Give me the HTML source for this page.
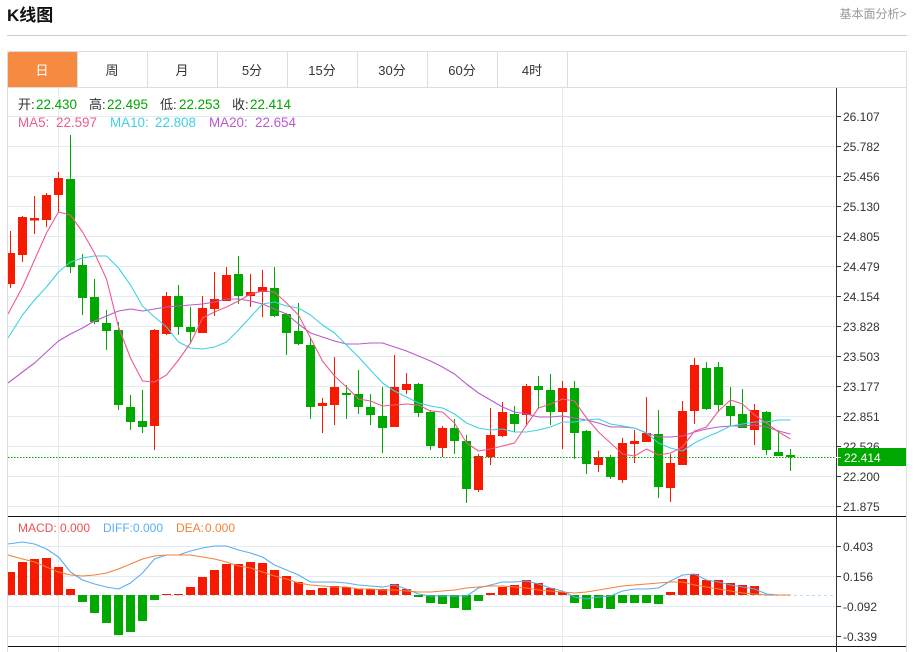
<!DOCTYPE html>
<html lang="zh">
<head>
<meta charset="utf-8">
<title>K线图</title>
<style>
html,body{margin:0;padding:0;background:#fff;width:914px;height:652px;overflow:hidden}
svg{display:block;position:absolute;left:0;top:0}
text{font-family:"Liberation Sans","Noto Sans CJK SC",sans-serif}
</style>
</head>
<body>
<svg width="914" height="652" viewBox="0 0 914 652" xmlns="http://www.w3.org/2000/svg">
<defs><clipPath id="c"><rect x="8" y="88" width="828" height="564"/></clipPath></defs>

<text x="7" y="21" font-size="17" font-weight="bold" fill="#111">K线图</text>
<text x="839.5" y="18" font-size="12" fill="#999">基本面分析&gt;</text>
<path d="M7 35.5H907" stroke="#ccc" fill="none"/>

<!-- frame and tabs -->
<path d="M7.5 51.5H906.5V652M7.5 51.5V652M7.5 87.5H906.5" stroke="#ddd" fill="none"/>
<path d="M9 52H77V87H8V53z" fill="#f58a40"/>
<path d="M77.5 52V87M147.5 52V87M217.5 52V87M287.5 52V87M357.5 52V87M427.5 52V87M497.5 52V87M567.5 52V87" stroke="#ddd" fill="none"/>
<g font-size="13" fill="#333" text-anchor="middle">
<text x="42" y="75" fill="#fff">日</text>
<text x="112" y="75">周</text>
<text x="182" y="75">月</text>
<text x="252" y="75">5分</text>
<text x="322" y="75">15分</text>
<text x="392" y="75">30分</text>
<text x="462" y="75">60分</text>
<text x="532" y="75">4时</text>
</g>

<!-- grid -->
<path d="M8 116.5H836M8 146.5H836M8 176.5H836M8 206.5H836M8 236.5H836M8 266.5H836M8 296.5H836M8 326.5H836M8 356.5H836M8 386.5H836M8 416.5H836M8 446.5H836M8 476.5H836M8 506.5H836M8 546.5H836M8 576.5H836M8 606.5H836M8 636.5H836M58.5 88V652M562.5 88V652" stroke="#e3ecf3" fill="none"/>

<g clip-path="url(#c)">
<!-- red wicks -->
<path fill="none" stroke="#f51a00" d="M10.5 231V288M22.5 216V262M34.5 196V234M46.5 193V227M58.5 172V212M154.5 329V450M166.5 292V335M202.5 296V333M214.5 272V316M226.5 267V301M250.5 274V307M262.5 270V317M322.5 398V433M334.5 357V425M394.5 355V427M406.5 373V394M442.5 426V457M478.5 454V492M490.5 408V465M502.5 402V437M526.5 384V426M562.5 381V449M598.5 451V472M622.5 438V483M634.5 430V463M646.5 397V442M670.5 454V502M682.5 401V465M694.5 358V424M754.5 404V445"/>
<!-- green wicks -->
<path fill="none" stroke="#00a800" d="M70.5 135V273M82.5 254V315M94.5 279V324M106.5 310V350M118.5 322V410M130.5 395V430M142.5 390V433M178.5 285V335M190.5 307V343M238.5 256V304M274.5 267V317M286.5 313V355M298.5 303V345M310.5 337V419M346.5 385V419M358.5 370V414M370.5 394V425M382.5 387V453M418.5 383V417M430.5 410V450M454.5 419V454M466.5 435V503M514.5 406V432M538.5 376V409M550.5 374V425M574.5 381V459M586.5 430V474M610.5 455V479M658.5 410V498M706.5 362V410M718.5 362V412M730.5 387V426M742.5 389V428M766.5 411V455M778.5 430V456M790.5 449V471"/>
<!-- red bodies -->
<path fill="#f51a00" d="M6 253h9V284h-9zM18 217h9V255h-9zM30 218h9V220.5h-9zM42 195h9V220h-9zM54 178h9V195h-9zM150 330h9V426h-9zM162 296h9V334h-9zM198 308h9V333h-9zM210 299h9V309h-9zM222 275h9V301h-9zM246 292h9V296h-9zM258 287h9V292h-9zM318 403h9V406h-9zM330 387h9V405h-9zM390 387h9V427h-9zM402 384h9V390h-9zM438 428h9V448h-9zM474 456h9V490h-9zM486 435h9V457h-9zM498 412h9V436h-9zM522 386h9V415h-9zM558 388h9V412h-9zM594 457h9V465h-9zM618 443h9V480h-9zM630 441h9V444h-9zM642 433h9V442h-9zM666 463h9V488h-9zM678 411h9V465h-9zM690 365h9V411h-9zM750 410h9V430h-9z"/>
<!-- green bodies -->
<path fill="#00a800" d="M66 179h9V267h-9zM78 265h9V298h-9zM90 297h9V322h-9zM102 323h9V331h-9zM114 330h9V405h-9zM126 407h9V422h-9zM138 421h9V427h-9zM174 296h9V327h-9zM186 327h9V332h-9zM234 274h9V296h-9zM270 288h9V316h-9zM282 314h9V333h-9zM294 331h9V344h-9zM306 345h9V407h-9zM342 393h9V395h-9zM354 394h9V407h-9zM366 407h9V415h-9zM378 416h9V428h-9zM414 384h9V413h-9zM426 412h9V446h-9zM450 428h9V441h-9zM462 441h9V489h-9zM510 414h9V424h-9zM534 386h9V390h-9zM546 390h9V412h-9zM570 388h9V433h-9zM582 431h9V464h-9zM606 457h9V477h-9zM654 434h9V487h-9zM702 368h9V409h-9zM714 367h9V405h-9zM726 406h9V416h-9zM738 414h9V428h-9zM762 412h9V450h-9zM774 452h9V456h-9zM786 455h9V457h-9z"/>

<!-- MA20 -->
<path fill="none" stroke="#b85ac8" stroke-width="1.1" stroke-linejoin="round" d="M8 383L22.5 372 34.5 363 46.5 352 58.5 341 70.5 334 82.5 328 94.5 321 106.5 316 118.5 311 130.5 309 142.5 311 154.5 309 166.5 307 178.5 306 190.5 305 202.5 304 214.5 302 226.5 299 238.5 299 250.5 301 262.5 304 274.5 309 286.5 314 298.5 324 310.5 333 322.5 337 334.5 341 346.5 344 358.5 344 370.5 343 382.5 343 394.5 347 406.5 351 418.5 356 430.5 361 442.5 367 454.5 374 466.5 384 478.5 393 490.5 400 502.5 407 514.5 412 526.5 414 538.5 417 550.5 417 562.5 416 574.5 418 586.5 420 598.5 423 610.5 427 622.5 427 634.5 428 646.5 433 658.5 437 670.5 437 682.5 436 694.5 432 706.5 429 718.5 427 730.5 426 742.5 426 754.5 425 766.5 427 778.5 431 790.5 434"/>
<!-- MA10 -->
<path fill="none" stroke="#3fd0e4" stroke-width="1.1" stroke-linejoin="round" d="M8 338L22.5 315 34.5 300 46.5 287 58.5 272 70.5 262 82.5 258 94.5 256 106.5 256 118.5 268 130.5 285 142.5 306 154.5 317 166.5 327 178.5 342 190.5 348 202.5 349 214.5 347 226.5 342 238.5 330 250.5 317 262.5 304 274.5 302 286.5 306 298.5 308 310.5 315 322.5 325 334.5 333 346.5 345 358.5 357 370.5 370 382.5 383 394.5 391 406.5 397 418.5 403 430.5 406 442.5 408 454.5 414 466.5 423 478.5 428 490.5 430 502.5 429 514.5 432 526.5 432 538.5 430 550.5 427 562.5 422 574.5 422 586.5 420 598.5 419 610.5 424 622.5 426 634.5 428 646.5 433 658.5 443 670.5 448 682.5 451 694.5 443 706.5 437 718.5 432 730.5 426 742.5 424 754.5 422 766.5 422 778.5 420 790.5 420"/>
<!-- MA5 -->
<path fill="none" stroke="#ee5a8e" stroke-width="1.1" stroke-linejoin="round" d="M8 314L22.5 287 34.5 260 46.5 233 58.5 212 70.5 215 82.5 232 94.5 253 106.5 279 118.5 327 130.5 358 142.5 381 154.5 382 166.5 375 178.5 360 190.5 343 202.5 318 214.5 312 226.5 307 238.5 301 250.5 294 262.5 291 274.5 292 286.5 303 298.5 315 310.5 338 322.5 361 334.5 376 346.5 387 358.5 399 370.5 401 382.5 406 394.5 405 406.5 404 418.5 405 430.5 411 442.5 412 454.5 423 466.5 443 478.5 451 490.5 449 502.5 446 514.5 443 526.5 425 538.5 408 550.5 404 562.5 399 574.5 401 586.5 418 598.5 432 610.5 443 622.5 454 634.5 456 646.5 449 658.5 455 670.5 453 682.5 447 694.5 431 706.5 427 718.5 411 730.5 400 742.5 404 754.5 415 766.5 423 778.5 432 790.5 439"/>

<!-- last price line -->
<path d="M8 457.5H836" stroke="#00a800" stroke-dasharray="1.5 1.5" fill="none"/>

<!-- MACD -->
<path d="M8 595.5H836" stroke="#b5e2f2" stroke-dasharray="3 3" fill="none"/>
<path fill="#f51a00" d="M6 572h9V595h-9zM18 562h9V595h-9zM30 559h9V595h-9zM42 558h9V595h-9zM54 567h9V595h-9zM66 589h9V595h-9zM162 594h9V595h-9zM174 594h9V595h-9zM186 587h9V595h-9zM198 577h9V595h-9zM210 570h9V595h-9zM222 564h9V595h-9zM234 564h9V595h-9zM246 562h9V595h-9zM258 563h9V595h-9zM270 570h9V595h-9zM282 576h9V595h-9zM294 582h9V595h-9zM306 590h9V595h-9zM318 588h9V595h-9zM330 586h9V595h-9zM342 587h9V595h-9zM354 589h9V595h-9zM366 589h9V595h-9zM378 589h9V595h-9zM390 584h9V595h-9zM402 589h9V595h-9zM486 593h9V595h-9zM498 587h9V595h-9zM510 585h9V595h-9zM522 580h9V595h-9zM534 583h9V595h-9zM546 588h9V595h-9zM558 592h9V595h-9zM666 592h9V595h-9zM678 579h9V595h-9zM690 574h9V595h-9zM702 580h9V595h-9zM714 580h9V595h-9zM726 583h9V595h-9zM738 585h9V595h-9zM750 586h9V595h-9z"/>
<path fill="#00a800" d="M78 595h9V602h-9zM90 595h9V613h-9zM102 595h9V623h-9zM114 595h9V635h-9zM126 595h9V632h-9zM138 595h9V621h-9zM150 595h9V600h-9zM414 595h9V597h-9zM426 595h9V603h-9zM438 595h9V604h-9zM450 595h9V608h-9zM462 595h9V610h-9zM474 595h9V601h-9zM570 595h9V603h-9zM582 595h9V609h-9zM594 595h9V608h-9zM606 595h9V609h-9zM618 595h9V603h-9zM630 595h9V603h-9zM642 595h9V603h-9zM654 595h9V604h-9z"/>
<path fill="none" stroke="#5aaef2" stroke-width="1.1" stroke-linejoin="round" d="M8 544L22.5 542 34.5 544 46.5 549 58.5 557 70.5 572 82.5 580 94.5 584 106.5 587 118.5 589 130.5 583 142.5 573 154.5 559 166.5 555 178.5 555 190.5 551 202.5 548 214.5 546 226.5 546 238.5 550 250.5 553 262.5 557 274.5 565 286.5 570 298.5 575 310.5 582 322.5 582 334.5 582 346.5 583 358.5 585 370.5 586 382.5 587 394.5 585 406.5 589 418.5 594 430.5 596 442.5 596 454.5 596 466.5 596 478.5 588 490.5 585 502.5 582 514.5 582 526.5 581 538.5 584 550.5 588 562.5 591 574.5 597 586.5 599 598.5 597 610.5 596 622.5 591 634.5 589 646.5 589 658.5 588 670.5 581 682.5 575 694.5 574 706.5 580 718.5 582 730.5 585 742.5 587 754.5 589 766.5 594 778.5 595 790.5 595"/>
<path fill="none" stroke="#f5803a" stroke-width="1.1" stroke-linejoin="round" d="M8 555L22.5 559 34.5 562 46.5 567 58.5 572 70.5 575 82.5 576 94.5 575 106.5 573 118.5 569 130.5 564 142.5 559 154.5 556 166.5 555 178.5 555 190.5 555 202.5 557 214.5 559 226.5 562 238.5 566 250.5 568 262.5 572 274.5 576 286.5 579 298.5 583 310.5 585 322.5 586 334.5 587 346.5 587 358.5 589 370.5 589 382.5 590 394.5 590 406.5 591 418.5 592 430.5 592 442.5 591 454.5 590 466.5 588 478.5 587 490.5 586 502.5 586 514.5 587 526.5 588 538.5 590 550.5 591 562.5 592 574.5 593 586.5 592 598.5 590 610.5 588 622.5 586 634.5 585 646.5 584 658.5 583 670.5 582 682.5 582 694.5 585 706.5 587 718.5 589 730.5 591 742.5 593 754.5 594 766.5 595 778.5 595 790.5 595"/>
</g>

<!-- separators and axis -->
<path d="M8 516.5H906M8 646.5H906" stroke="#111" fill="none"/>
<path d="M836.5 88V652" stroke="#333" fill="none"/>
<path d="M836 116.5h5M836 146.5h5M836 176.5h5M836 206.5h5M836 236.5h5M836 266.5h5M836 296.5h5M836 326.5h5M836 356.5h5M836 386.5h5M836 416.5h5M836 446.5h5M836 476.5h5M836 506.5h5M836 546.5h5M836 576.5h5M836 606.5h5M836 636.5h5" stroke="#333" fill="none"/>
<g font-size="12" fill="#333">
<text x="843" y="121">26.107</text>
<text x="843" y="151">25.782</text>
<text x="843" y="181">25.456</text>
<text x="843" y="211">25.130</text>
<text x="843" y="241">24.805</text>
<text x="843" y="271">24.479</text>
<text x="843" y="301">24.154</text>
<text x="843" y="331">23.828</text>
<text x="843" y="361">23.503</text>
<text x="843" y="391">23.177</text>
<text x="843" y="421">22.851</text>
<text x="843" y="451">22.526</text>
<text x="843" y="481">22.200</text>
<text x="843" y="511">21.875</text>
<text x="843" y="551">0.403</text>
<text x="843" y="581">0.156</text>
<text x="843" y="611">-0.092</text>
<text x="843" y="641">-0.339</text>
</g>
<rect x="838" y="448" width="68" height="18" fill="#00a800"/>
<path d="M836 457.5h5" stroke="#fff" fill="none"/>
<text x="844" y="462" font-size="12" fill="#fff">22.414</text>

<!-- legends -->
<g font-size="13.4">
<text x="18" y="109" fill="#333" font-size="13">开:</text><text x="36" y="109" fill="#00a800">22.430</text>
<text x="89" y="109" fill="#333" font-size="13">高:</text><text x="107" y="109" fill="#00a800">22.495</text>
<text x="160" y="109" fill="#333" font-size="13">低:</text><text x="179" y="109" fill="#00a800">22.253</text>
<text x="232" y="109" fill="#333" font-size="13">收:</text><text x="250" y="109" fill="#00a800">22.414</text>
<text x="18" y="127" fill="#ee5a8e">MA5:</text><text x="56" y="127" fill="#ee5a8e">22.597</text>
<text x="110" y="127" fill="#3fd0e4">MA10:</text><text x="155" y="127" fill="#3fd0e4">22.808</text>
<text x="209" y="127" fill="#b85ac8">MA20:</text><text x="255" y="127" fill="#b85ac8">22.654</text>
</g>
<g font-size="12">
<text x="18" y="532" fill="#f05050">MACD:</text><text x="60" y="532" fill="#f05050">0.000</text>
<text x="103" y="532" fill="#5aaef2">DIFF:</text><text x="133" y="532" fill="#5aaef2">0.000</text>
<text x="176" y="532" fill="#f5803a">DEA:</text><text x="205" y="532" fill="#f5803a">0.000</text>
</g>
</svg>
</body>
</html>
